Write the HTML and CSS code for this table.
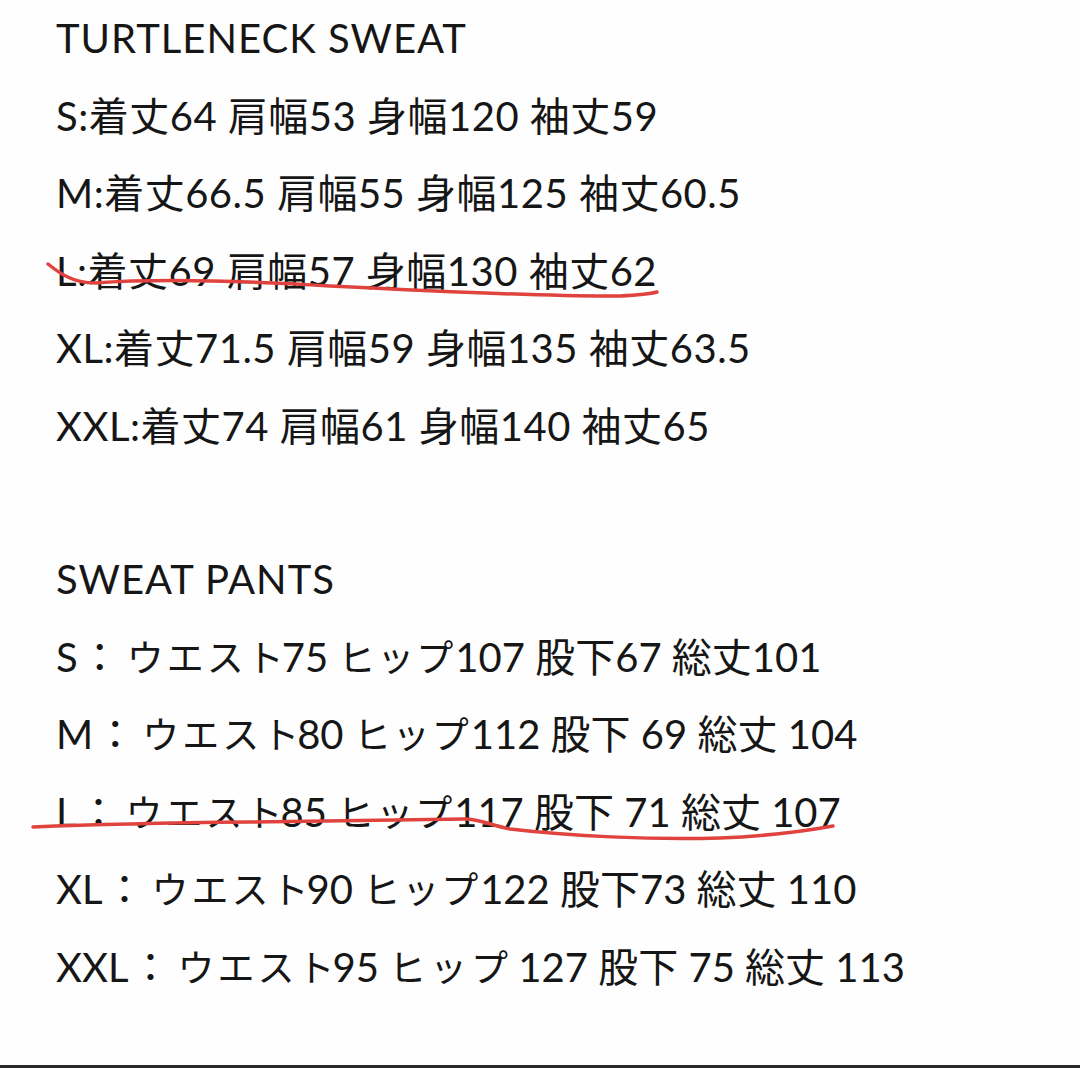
FILE: index.html
```html
<!DOCTYPE html>
<html lang="ja">
<head>
<meta charset="utf-8">
<link rel="stylesheet" href="styles.css">
</head>
<body>
<div class="page">
  <section class="block">
    <div class="line title">TURTLENECK SWEAT</div>
    <div class="line">S:着丈64 肩幅53 身幅120 袖丈59</div>
    <div class="line">M:着丈66.5 肩幅55 身幅125 袖丈60.5</div>
    <div class="line">L:着丈69 肩幅57 身幅130 袖丈62</div>
    <div class="line">XL:着丈71.5 肩幅59 身幅135 袖丈63.5</div>
    <div class="line">XXL:着丈74 肩幅61 身幅140 袖丈65</div>
  </section>
  <section class="block second">
    <div class="line title">SWEAT PANTS</div>
    <div class="line">S<span class="c">：</span><span class="k w">ウエスト</span>75 <span class="k h">ヒップ</span>107 股下67 総丈101</div>
    <div class="line">M<span class="c">：</span><span class="k w">ウエスト</span>80 <span class="k h">ヒップ</span>112 股下 69 総丈 104</div>
    <div class="line">L<span class="c">：</span><span class="k w">ウエスト</span>85 <span class="k h">ヒップ</span>117 股下 71 総丈 107</div>
    <div class="line">XL<span class="c">：</span><span class="k w">ウエスト</span>90 <span class="k h">ヒップ</span>122 股下73 総丈 110</div>
    <div class="line">XXL<span class="c">：</span><span class="k w">ウエスト</span>95 <span class="k hw">ヒップ</span> 127 股下 75 総丈 113</div>
  </section>
  <svg class="marks" width="1080" height="1068" viewBox="0 0 1080 1068">
    <path d="M48 264 C58 272 72 283 95 283 C150 279 230 280 330 286 C450 292 560 297 620 296 C640 295 650 294 657 292" />
    <path d="M33 827 C80 825 150 823 250 822 C350 821 430 820 465 819 C480 819 490 825 510 829 C570 836 650 840 720 838 C770 836 800 832 833 826" />
  </svg>
  <div class="rule"></div>
</div>
</body>
</html>
```
FILE: styles.css
```css
html, body {
  margin: 0;
  padding: 0;
  background: #fefefe;
}
.page {
  position: relative;
  width: 1080px;
  height: 1068px;
  overflow: hidden;
  font-family: Lato, "Noto Sans CJK JP", sans-serif;
  color: #161616;
  font-size: 40px;
  letter-spacing: 0.5px;
}
.block {
  padding-left: 56px;
  padding-top: 0;
}
.block.second {
  padding-top: 76px;
  letter-spacing: 0;
}
.line {
  height: 77.5px;
  line-height: 77.5px;
  white-space: pre;
}
.line.title {
  letter-spacing: 1px;
}
.c {
  margin: 0 7px 0 2px;
}
.k {
  font-size: 37px;
}
.k.w {
  letter-spacing: 3px;
  margin-right: -5px;
}
.k.h {
  letter-spacing: 2px;
  margin-right: 0;
}
.k.hw {
  letter-spacing: 4px;
  margin-right: -4px;
}
.marks {
  position: absolute;
  left: 0;
  top: 0;
  fill: none;
  stroke: #e0423e;
  stroke-width: 3.5;
  stroke-linecap: round;
}
.rule {
  position: absolute;
  left: 0;
  right: 0;
  bottom: 0;
  height: 3px;
  background: #2a2a2a;
}
```
